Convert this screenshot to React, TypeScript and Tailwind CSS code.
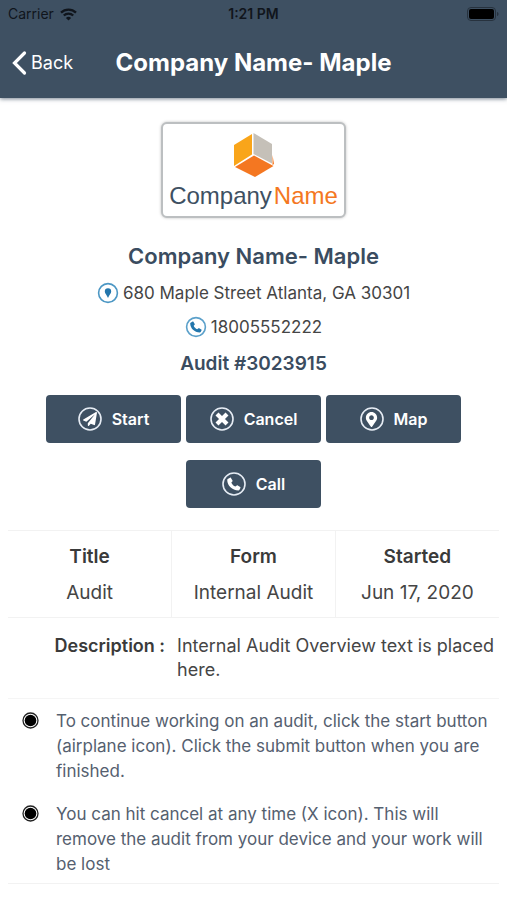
import type { ReactNode } from 'react';
import { FaMapMarkerAlt, FaPaperPlane } from 'react-icons/fa';

const AUDIT = {
  company: 'Company Name- Maple',
  address: '680 Maple Street Atlanta, GA 30301',
  phone: '18005552222',
  number: '3023915',
  description: 'Internal Audit Overview text is placed here.',
};

const DETAILS = [
  { label: 'Title', value: 'Audit' },
  { label: 'Form', value: 'Internal Audit' },
  { label: 'Started', value: 'Jun 17, 2020' },
];

const NOTES = [
  'To continue working on an audit, click the start button (airplane icon). Click the submit button when you are finished.',
  'You can hit cancel at any time (X icon). This will remove the audit from your device and your work will be lost',
];

export default function App() {
  return (
    <div className="bg-white font-[Inter,sans-serif] text-[#454545]">
      <Header />

      <main className="px-2">
        <section className="flex flex-col items-center pt-6 text-center">
          <CompanyLogo />
          <h2 className="mt-6 text-[22px] leading-7 font-semibold text-[#3a4c60]">{AUDIT.company}</h2>
          <p className="mt-[9px] flex items-center gap-1 text-[17px] leading-7">
            <PinBadge />
            {AUDIT.address}
          </p>
          <p className="mt-1.5 flex items-center gap-1 text-[17px] leading-7">
            <PhoneBadge />
            {AUDIT.phone}
          </p>
          <p className="mt-[9px] text-[19px] leading-7 font-semibold text-[#3a4c60]">Audit #{AUDIT.number}</p>
        </section>

        <div className="mt-[17px] mb-[22px] flex flex-wrap justify-center gap-x-[5px] gap-y-[17px] px-8">
          <ActionButton label="Start" icon={<FaPaperPlane size={14} />} />
          <ActionButton label="Cancel" icon={<CrossIcon />} />
          <ActionButton label="Map" icon={<FaMapMarkerAlt size={15} />} />
          <ActionButton label="Call" icon={<HandsetIcon />} />
        </div>

        <table className="w-full table-fixed border-y border-[#f2f2f2] text-[19px] leading-7">
          <thead>
            <tr>
              {DETAILS.map((d) => (
                <th key={d.label} className="border-r border-[#f2f2f2] pt-3 pb-1 font-semibold text-[#3a3a3a] last:border-r-0">
                  {d.label}
                </th>
              ))}
            </tr>
          </thead>
          <tbody>
            <tr>
              {DETAILS.map((d) => (
                <td key={d.label} className="border-r border-[#f2f2f2] pt-1 pb-2.5 text-center last:border-r-0">
                  {d.value}
                </td>
              ))}
            </tr>
          </tbody>
        </table>

        <dl className="flex gap-3 border-b border-[#f5f5f5] py-4 text-lg leading-6">
          <dt className="w-[32%] shrink-0 text-right font-semibold whitespace-nowrap text-[#3a3a3a]">Description :</dt>
          <dd>{AUDIT.description}</dd>
        </dl>

        <ul className="flex flex-col gap-[18px] border-b border-[#f2f2f2] pt-2.5 pr-2 pb-1.5 pl-3.5 text-[17px] leading-[25px] text-[#55606f]">
          {NOTES.map((note) => (
            <li key={note} className="flex gap-[17px]">
              <BulletIcon />
              <p>{note}</p>
            </li>
          ))}
        </ul>
      </main>
    </div>
  );
}

function Header() {
  return (
    <header className="bg-[#3e5062] pb-3 shadow-[0_1px_4px_rgba(62,80,98,0.7)]">
      <div className="grid h-7 grid-cols-3 items-center px-2 text-sm text-[#10151c]">
        <span className="flex items-center gap-1.5">
          Carrier
          <WifiIcon />
        </span>
        <span className="text-center font-semibold">1:21 PM</span>
        <span className="flex justify-end">
          <BatteryIcon />
        </span>
      </div>
      <div className="mt-[11px] grid grid-cols-[1fr_auto_1fr] items-center px-3 text-white">
        <button type="button" className="flex items-center gap-1 text-lg leading-[47px]">
          <svg width="15" height="26" viewBox="0 0 15 26" fill="none" stroke="currentColor" strokeWidth="3.2" strokeLinecap="round">
            <path d="M12.5 3 2.5 13l10 10" />
          </svg>
          Back
        </button>
        <h1 className="text-2xl font-bold">{AUDIT.company}</h1>
      </div>
    </header>
  );
}

function ActionButton({ label, icon }: { label: string; icon: ReactNode }) {
  return (
    <button
      type="button"
      className="flex h-12 w-[135px] items-center justify-center gap-2.5 rounded bg-[#3e5062] text-base font-semibold text-white"
    >
      <span className="relative flex size-6 items-center justify-center">
        <svg width="24" height="24" viewBox="0 0 24 24" className="absolute inset-0">
          <circle cx="12" cy="12" r="11" fill="none" stroke="#e6ecf4" strokeWidth="1.6" />
        </svg>
        {icon}
      </span>
      {label}
    </button>
  );
}

function CompanyLogo() {
  return (
    <div className="flex h-24 w-[185px] flex-col items-center rounded-md border-2 border-[#bcbfc1] bg-white pt-2 shadow-[0_0_3px_rgba(0,0,0,0.25)]">
      <svg width="42" height="46" viewBox="0 0 42 46">
        <path d="M1 13 19 2v20.500L1 34z" fill="#f9a51a" />
        <path d="M20.500 1 39 12v19.500L20.500 22z" fill="#c5c0b8" />
        <path d="m39.500 23 1.500 9-1.500 1z" fill="#f47721" />
        <path d="M21 23.500 40.500 34 22 45 2 35z" fill="#f47721" />
      </svg>
      <p className="font-['Liberation_Sans',Arial,sans-serif] text-2xl leading-9 whitespace-nowrap text-[#3e5062]">
        Company<span className="ml-0.5 text-[#f47721]">Name</span>
      </p>
    </div>
  );
}

function PinBadge() {
  return (
    <svg width="22" height="22" viewBox="0 0 22 22">
      <circle cx="11" cy="11" r="9.400" fill="none" stroke="#4c97c4" strokeWidth="1.600" />
      <path d="M11 6.200a3.200 3.200 0 0 0-3.200 3.200c0 2 2 3.200 3.200 6.600 1.200-3.400 3.200-4.600 3.200-6.600A3.200 3.200 0 0 0 11 6.200z" fill="#2376ac" />
    </svg>
  );
}

function PhoneBadge() {
  return (
    <svg width="22" height="22" viewBox="0 0 22 22">
      <circle cx="11" cy="11" r="9.400" fill="none" stroke="#5ba0ca" strokeWidth="1.600" />
      <g transform="translate(5 5)" className="text-[#2376ac]">
        <HandsetPath />
      </g>
    </svg>
  );
}

function HandsetIcon() {
  return (
    <svg width="14" height="14" viewBox="0 0 12 12">
      <HandsetPath />
    </svg>
  );
}

function HandsetPath() {
  return (
    <path
      d="M.6 1.800 2.600.6c.3-.2.600-.1.800.2L4.700 3c.2.300.1.600-.1.800l-.9.900c.6 1.600 1.900 2.900 3.500 3.500L8.400 7.300c.2-.2.500-.2.800 0l2.100 1.300c.3.200.4.500.2.800l-.8 1.600c-.2.300-.5.500-.9.500C4.400 11.500.2 7.300.2 2.600c0-.3.100-.6.400-.8z"
      fill="currentColor"
    />
  );
}

function CrossIcon() {
  return (
    <svg width="14" height="14" viewBox="0 0 14 14" stroke="currentColor" strokeWidth="4.200">
      <path d="m2 2 10 10M12 2 2 12" />
    </svg>
  );
}

function BulletIcon() {
  return (
    <svg width="17" height="17" viewBox="0 0 17 17" className="mt-[3px] shrink-0">
      <circle cx="8.500" cy="8.500" r="7.500" fill="#fff" stroke="#222" strokeWidth="1.300" />
      <circle cx="8.500" cy="8.500" r="5.800" fill="#000" />
    </svg>
  );
}

function WifiIcon() {
  return (
    <svg width="17" height="13" viewBox="0 0 17 13" fill="none" stroke="currentColor" strokeWidth="2.300">
      <path d="M1 4.600a10.700 10.700 0 0 1 15 0M3.800 7.500a6.700 6.700 0 0 1 9.400 0" />
      <path d="M8.500 12.600 5.900 10a3.700 3.700 0 0 1 5.200 0z" fill="currentColor" stroke="none" />
    </svg>
  );
}

function BatteryIcon() {
  return (
    <svg width="32" height="14" viewBox="0 0 32 14">
      <rect x=".5" y=".5" width="28" height="13" rx="3.500" fill="none" stroke="#27323e" />
      <rect x="2" y="2" width="25" height="10" rx="2" fill="#000" />
      <path d="M30 5v4c1-.4 1.500-1.100 1.500-2S31 5.400 30 5z" fill="#27323e" />
    </svg>
  );
}
